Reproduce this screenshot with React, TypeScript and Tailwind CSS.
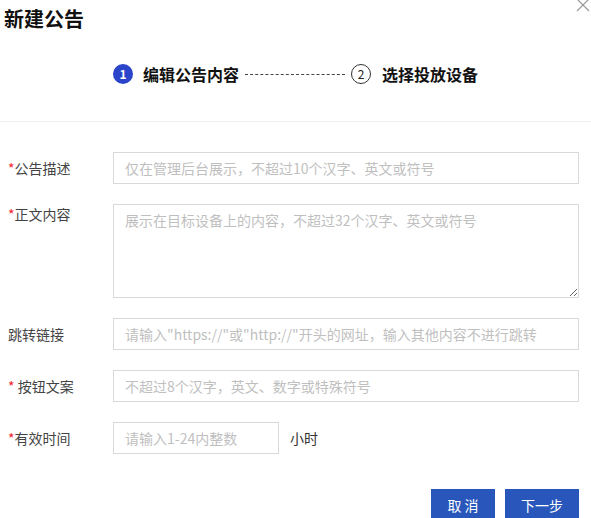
import React from 'react'

const font = "font-['Noto_Sans_CJK_SC','Noto_Sans',sans-serif]"

function Label({ text, required, spaced }: { text: string; required?: boolean; spaced?: boolean }) {
  return (
    <div className="w-[113px] shrink-0 pl-2 text-[14px] leading-5 text-[#444]">
      {required && <span className="text-[#f5222d]">*{spaced ? ' ' : ''}</span>}
      {text}
    </div>
  )
}

const inputCls =
  'h-8 border border-[#d9d9d9] bg-white px-[11px] text-[14px] text-[#333] outline-none placeholder:text-[#bfbfbf]'

export default function App() {
  return (
    <div className={`relative h-[518px] w-[591px] overflow-hidden bg-white ${font}`}>
      {/* 关闭 */}
      <svg className="absolute left-[576px] top-[-2px]" width="14" height="14" viewBox="0 0 14 14">
        <path d="M1 1L13 13M13 1L1 13" stroke="#9a9a9a" strokeWidth="1.2" fill="none" />
      </svg>

      {/* 标题 + 步骤 */}
      <div className="h-[122px] border-b border-[#f0f0f0]">
        <div className="pl-1 pt-[5px] text-[20px] font-bold leading-[28px] text-[#111]">新建公告</div>
        <div className="mt-[31px] flex h-5 items-center justify-center">
          <span className="flex h-5 w-5 items-center justify-center rounded-full bg-[#2a45c9] text-[12px] font-bold leading-none text-white">
            1
          </span>
          <span className="ml-[10px] text-[16px] font-bold leading-5 text-[#111]">编辑公告内容</span>
          <span className="mx-[6px] w-[100px] border-t border-dashed border-[#444]" />
          <span className="flex h-5 w-5 items-center justify-center rounded-full border border-[#333] text-[12px] leading-none text-[#222]">
            2
          </span>
          <span className="ml-[11px] text-[16px] font-bold leading-5 text-[#111]">选择投放设备</span>
        </div>
      </div>

      {/* 表单 */}
      <div className="pt-[30px] pr-3">
        <div className="mb-5 flex items-center">
          <Label text="公告描述" required />
          <input className={`${inputCls} flex-1`} placeholder="仅在管理后台展示，不超过10个汉字、英文或符号" />
        </div>

        <div className="mb-5 flex items-start">
          <Label text="正文内容" required />
          <textarea
            className="h-[94px] flex-1 border border-[#d9d9d9] bg-white px-[11px] pt-[5px] text-[14px] leading-5 text-[#333] outline-none placeholder:text-[#bfbfbf]"
            placeholder="展示在目标设备上的内容，不超过32个汉字、英文或符号"
          />
        </div>

        <div className="mb-5 flex items-center">
          <Label text="跳转链接" />
          <input
            className={`${inputCls} flex-1`}
            placeholder={'请输入"https://"或"http://"开头的网址，输入其他内容不进行跳转'}
          />
        </div>

        <div className="mb-5 flex items-center">
          <Label text="按钮文案" required spaced />
          <input className={`${inputCls} flex-1`} placeholder="不超过8个汉字，英文、数字或特殊符号" />
        </div>

        <div className="flex items-center">
          <Label text="有效时间" required />
          <input className={`${inputCls} w-[166px]`} placeholder="请输入1-24内整数" />
          <span className="ml-[11px] text-[14px] text-[#333]">小时</span>
        </div>

        <div className="mt-[35px] flex justify-end gap-[10px]">
          <button className="h-8 w-16 bg-[#2856bb] text-[14px] text-white">取 消</button>
          <button className="h-8 w-[74px] bg-[#2856bb] text-[14px] text-white">下一步</button>
        </div>
      </div>
    </div>
  )
}
